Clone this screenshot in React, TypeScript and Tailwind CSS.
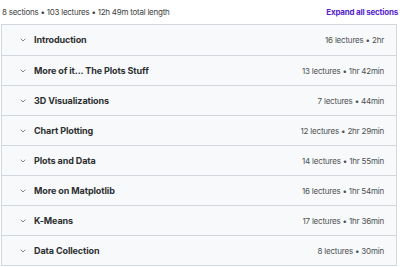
const sections = [
  { title: "Introduction", info: "16 lectures • 2hr" },
  { title: "More of it... The Plots Stuff", info: "13 lectures • 1hr 42min" },
  { title: "3D Visualizations", info: "7 lectures • 44min" },
  { title: "Chart Plotting", info: "12 lectures • 2hr 29min" },
  { title: "Plots and Data", info: "14 lectures • 1hr 55min" },
  { title: "More on Matplotlib", info: "16 lectures • 1hr 54min" },
  { title: "K-Means", info: "17 lectures • 1hr 36min" },
  { title: "Data Collection", info: "8 lectures • 30min" },
];

const Chevron = () => (
  <svg width="8" height="8" viewBox="0 0 24 24" fill="none" stroke="#6a6f73" strokeWidth="2.5" strokeLinecap="round" strokeLinejoin="round">
    <path d="M6 9l6 6 6-6" />
  </svg>
);

export default function App() {
  return (
    <div className="w-[400px] h-[267px] bg-white font-['Inter',sans-serif] text-[#2d2f31] overflow-hidden">
      <div className="flex items-center justify-between h-[24px] pl-[2px] pr-[2px]">
        <span className="text-[8px] text-[#3e4143] tracking-[-0.25px]">
          8 sections • 103 lectures • 12h 49m total length
        </span>
        <span className="text-[8px] font-bold text-[#5624d0] tracking-[-0.2px]">Expand all sections</span>
      </div>
      <div className="mx-[1px] w-[396px] border border-[#d1d7dc]">
        {sections.map((s, i) => (
          <div
            key={s.title}
            className={`flex items-center justify-between h-[30px] bg-[#f7f9fa] pl-[17px] pr-[12px] ${i > 0 ? "border-t border-[#d1d7dc]" : ""}`}
          >
            <div className="flex items-center gap-[7px]">
              <Chevron />
              <span className="text-[9px] font-bold tracking-[-0.1px]">{s.title}</span>
            </div>
            <span className="text-[8px] text-[#4d5154] tracking-[-0.2px]">{s.info}</span>
          </div>
        ))}
      </div>
    </div>
  );
}
